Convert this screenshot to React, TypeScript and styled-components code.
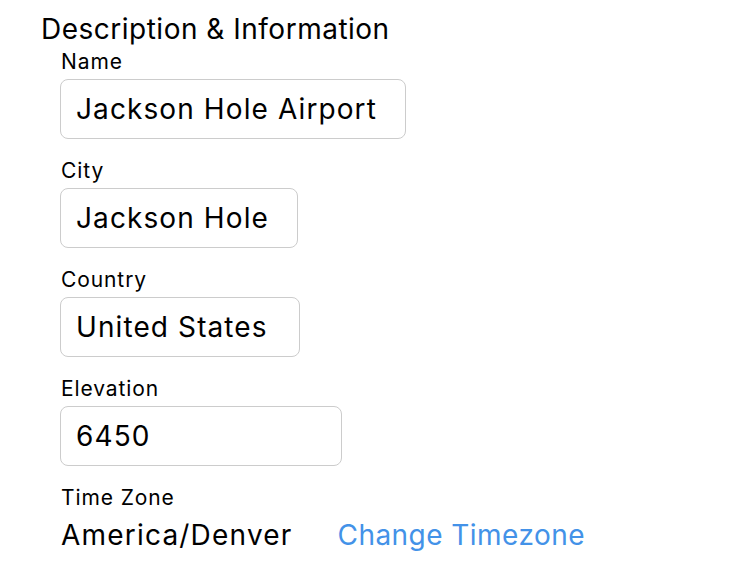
import React from "react";
import styled, { createGlobalStyle } from "styled-components";

const Global = createGlobalStyle`
  html, body { margin: 0; padding: 0; background: #ffffff; }
  body { font-family: Inter, "Noto Sans", sans-serif; color: #000; }
`;

const Page = styled.div`
  display: flex;
  flex-direction: column;
  padding: 12px 0 0 41px;
`;

const Heading = styled.h2`
  margin: 0;
  font-size: 28px;
  font-weight: 400;
  line-height: 34px;
  letter-spacing: 0.5px;
`;

const Fields = styled.div`
  display: flex;
  flex-direction: column;
  gap: 16px;
  padding-left: 19px;
`;

const Field = styled.div`
  display: flex;
  flex-direction: column;
`;

const Label = styled.label`
  font-size: 21px;
  line-height: 31px;
  height: 31px;
  padding-left: 1px;
  margin-bottom: 2px;
  letter-spacing: 0.9px;
`;

const Box = styled.input<{ $w: number }>`
  box-sizing: border-box;
  width: ${(p) => p.$w}px;
  height: 60px;
  border: 1px solid #cccccc;
  border-radius: 8px;
  padding: 0 0 0 15px;
  font-family: inherit;
  font-size: 28px;
  color: #000;
  background: #fff;
  outline: none;
  letter-spacing: 1.1px;
`;

const ZoneRow = styled.div`
  display: flex;
  align-items: baseline;
  gap: 45px;
  padding-left: 1px;
  margin-top: 2px;
`;

const Zone = styled.span`
  font-size: 28px;
  line-height: 36px;
  letter-spacing: 1.2px;
`;

const ChangeLink = styled.a`
  font-size: 28px;
  line-height: 36px;
  color: #4392e8;
  text-decoration: none;
  letter-spacing: 0.45px;
  cursor: pointer;
`;

const fields = [
  { label: "Name", value: "Jackson Hole Airport", w: 346 },
  { label: "City", value: "Jackson Hole", w: 238 },
  { label: "Country", value: "United States", w: 240 },
  { label: "Elevation", value: "6450", w: 282 },
];

export default function App() {
  return (
    <>
      <Global />
      <Page>
        <Heading>Description &amp; Information</Heading>
        <Fields>
          {fields.map((f) => (
            <Field key={f.label}>
              <Label>{f.label}</Label>
              <Box $w={f.w} value={f.value} readOnly />
            </Field>
          ))}
          <Field>
            <Label>Time Zone</Label>
            <ZoneRow>
              <Zone>America/Denver</Zone>
              <ChangeLink>Change Timezone</ChangeLink>
            </ZoneRow>
          </Field>
        </Fields>
      </Page>
    </>
  );
}
